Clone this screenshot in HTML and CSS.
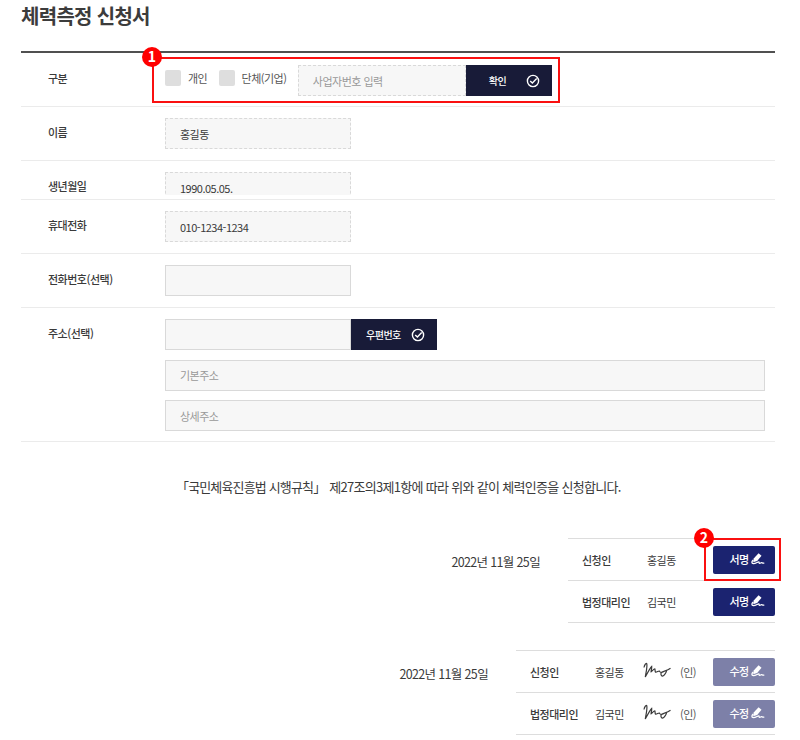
FILE: index.html
```html
<!DOCTYPE html>
<html lang="ko">
<head>
    <meta charset="UTF-8">
    <meta name="viewport" content="width=device-width, initial-scale=1.0">
    <title>체력측정 신청서</title>
    <link rel="stylesheet" href="styles.css">
</head>
<body>

    <!-- 아이콘 -->
    <svg class="sprite" width="0" height="0">
        <symbol id="icon-check" viewBox="0 0 14 14">
            <circle cx="7" cy="7" r="5.6" fill="none" stroke="currentColor" stroke-width="1.4"/>
            <path d="M4.2 7l2.2 2.1 4.3-4.6" fill="none" stroke="currentColor" stroke-width="1.4"/>
        </symbol>
        <symbol id="icon-sign" viewBox="0 0 14 12">
            <path d="M7.6 .3l2.9 2.4-4.3 5.3-4 1.3.5-3.9z" fill="currentColor"/>
            <path d="M2.3 7C.5 8.4.3 10.5 2.4 10.6c2.3 0 4.3-1.7 5.3-1.7.9 0 0 1.5.9 1.5s1.3-.8 2.1-.7c.6.1.8.6 2.6.4" fill="none" stroke="currentColor" stroke-width="1.3"/>
        </symbol>
        <symbol id="signature" viewBox="0 0 28 18">
            <path d="M1 5.5C1.5 3 3.2.5 3.8 1.8 4.5 4.5 3 10.5 2.3 15 4.5 11 7 6 8.7 4.5 9 6.5 7.8 8.8 8.1 9.8 9.3 9 10.8 6.8 11.8 6.8 12.3 7.8 11.8 9.5 12.6 10.2c1.3.2 2.4-1.2 3.6-1.2.9.6.9 1.6 2.1 1.5 1.9-.2 3.9-2.3 5.3-2-.2 2-2.4 5.3-4.1 5.7-1.6-.1-2.1-2.7-.9-3.9C20.6 9 24 9 27.5 6.3" fill="none" stroke="currentColor" stroke-width="1.2"/>
        </symbol>
    </svg>

    <div class="container">
        <h1>체력측정 신청서</h1>

        <form class="form">
            <div class="row row-type">
                <span class="label">구분</span>
                <div class="field">
                    <label class="check"><input type="checkbox">개인</label>
                    <label class="check"><input type="checkbox">단체(기업)</label>
                    <input type="text" class="input dashed biz" placeholder="사업자번호 입력">
                    <button type="button" class="btn btn-confirm">확인<svg class="icon"><use href="#icon-check"/></svg></button>
                </div>
                <div class="mark mark-type"><span class="badge">1</span></div>
            </div>
            <div class="row">
                <span class="label">이름</span>
                <div class="field"><input type="text" class="input dashed" value="홍길동"></div>
            </div>
            <div class="row row-birth">
                <span class="label">생년월일</span>
                <div class="field"><input type="text" class="input dashed" value="1990.05.05."></div>
            </div>
            <div class="row">
                <span class="label">휴대전화</span>
                <div class="field"><input type="text" class="input dashed" value="010-1234-1234"></div>
            </div>
            <div class="row">
                <span class="label">전화번호(선택)</span>
                <div class="field"><input type="text" class="input"></div>
            </div>
            <div class="row row-address">
                <span class="label">주소(선택)</span>
                <div class="field address">
                    <div class="zip">
                        <input type="text" class="input">
                        <button type="button" class="btn">우편번호<svg class="icon"><use href="#icon-check"/></svg></button>
                    </div>
                    <input type="text" class="input wide" placeholder="기본주소">
                    <input type="text" class="input wide" placeholder="상세주소">
                </div>
            </div>
        </form>

        <p class="notice"><span class="law">「국민체육진흥법 시행규칙」</span> 제27조의3제1항에 따라 위와 같이 체력인증을 신청합니다.</p>

        <!-- 서명 전 -->
        <div class="sign">
            <span class="date">2022년 11월 25일</span>
            <div class="sign-table">
                <div class="sign-row">
                    <span class="role">신청인</span>
                    <span class="name">홍길동</span>
                    <button type="button" class="btn-sign">서명<svg class="icon"><use href="#icon-sign"/></svg></button>
                    <div class="mark mark-sign"><span class="badge">2</span></div>
                </div>
                <div class="sign-row">
                    <span class="role">법정대리인</span>
                    <span class="name">김국민</span>
                    <button type="button" class="btn-sign">서명<svg class="icon"><use href="#icon-sign"/></svg></button>
                </div>
            </div>
        </div>

        <!-- 서명 후 -->
        <div class="sign signed">
            <span class="date">2022년 11월 25일</span>
            <div class="sign-table">
                <div class="sign-row">
                    <span class="role">신청인</span>
                    <span class="name">홍길동</span>
                    <svg class="signature"><use href="#signature"/></svg>
                    <span class="seal">(인)</span>
                    <button type="button" class="btn-sign">수정<svg class="icon"><use href="#icon-sign"/></svg></button>
                </div>
                <div class="sign-row">
                    <span class="role">법정대리인</span>
                    <span class="name">김국민</span>
                    <svg class="signature"><use href="#signature"/></svg>
                    <span class="seal">(인)</span>
                    <button type="button" class="btn-sign">수정<svg class="icon"><use href="#icon-sign"/></svg></button>
                </div>
            </div>
        </div>
    </div>

</body>
</html>
```
FILE: styles.css
```css
* {
    box-sizing: border-box;
}

body {
    margin: 0;
    background-color: #fff;
    color: #3a3a3a;
    font-family: "Noto Sans CJK KR", sans-serif;
    font-size: 11px;
    letter-spacing: -0.5px;
    overflow: hidden;
}

input, button {
    font-family: inherit;
    font-size: inherit;
    letter-spacing: inherit;
    margin: 0;
}

.sprite {
    display: block;
}

.container {
    width: 754px;
    margin-left: 21px;
}

h1 {
    margin: 0;
    height: 51px;
    line-height: 31px;
    font-size: 20px;
    font-weight: 700;
    letter-spacing: -0.7px;
    color: #3c3c3c;
}

/* 신청 양식 */
.form {
    border-top: 2px solid #505050;
}

.row {
    position: relative;
    display: flex;
    height: 54px;
    padding: 11px 10px 0 27px;
    border-bottom: 1px solid #ebebeb;
}

.label {
    width: 117px;
    height: 28px;
    line-height: 28px;
    font-weight: 500;
}

.field {
    display: flex;
    flex: 1;
    align-items: flex-start;
}

.row-type {
    padding-top: 12px;
}

.row-type .label {
    line-height: 26px;
}

.row-birth {
    height: 39px;
}

.row-birth .field {
    height: 23px;
    overflow: hidden;
}

.row-address {
    height: 134px;
}

.address {
    flex-direction: column;
    gap: 9.5px;
}

.zip {
    display: flex;
}

.check {
    display: flex;
    align-items: center;
    gap: 7px;
    height: 26px;
    margin-right: 11.3px;
    color: #555;
}

.check input {
    appearance: none;
    width: 16px;
    height: 16px;
    border-radius: 2px;
    background-color: #dedede;
}

.input {
    width: 186px;
    height: 31px;
    padding: 0 14px;
    border: 1px solid #d9d9d9;
    background-color: #f7f7f7;
    color: #3a3a3a;
    outline: none;
}

.input::placeholder {
    color: #999;
}

.dashed {
    border-style: dashed;
}

.biz {
    width: 168px;
}

.wide {
    width: 600px;
}

.btn {
    display: flex;
    align-items: center;
    justify-content: space-between;
    width: 86px;
    height: 31px;
    padding: 0 12px 0 15px;
    border: 0;
    background-color: #181b38;
    color: #fff;
    font-size: 10px;
    font-weight: 500;
}

.btn-confirm {
    padding-left: 23px;
}

.btn .icon {
    width: 14px;
    height: 14px;
}

/* 번호 표시 */
.mark {
    position: absolute;
    border: 2px solid #fa1010;
}

.mark-type {
    left: 131px;
    top: 4px;
    width: 408px;
    height: 46px;
}

.mark-sign {
    right: -6px;
    top: -1px;
    width: 77px;
    height: 43px;
}

.badge {
    position: absolute;
    left: -12px;
    top: -12px;
    width: 20px;
    height: 20px;
    border-radius: 50%;
    background-color: #f00;
    color: #fff;
    font-size: 14px;
    font-weight: 700;
    letter-spacing: 0;
    line-height: 19px;
    text-align: center;
}

.notice {
    margin: 0 0 39px;
    padding: 33px 0 0 155px;
    line-height: 24px;
    font-size: 13px;
    letter-spacing: -0.7px;
    white-space: nowrap;
}

.law {
    margin-right: 1px;
    letter-spacing: -0.85px;
}

/* 서명 */
.sign {
    display: flex;
    justify-content: flex-end;
    margin-bottom: 27px;
}

.date {
    margin-right: 28px;
    line-height: 47px;
    font-size: 12.5px;
    letter-spacing: -0.65px;
}

.sign-table {
    width: 207px;
    border-top: 1px solid #ddd;
}

.signed .sign-table {
    width: 259px;
}

.sign-row {
    position: relative;
    display: flex;
    align-items: center;
    height: 42px;
    padding-left: 14px;
    border-bottom: 1px solid #ddd;
}

.role {
    width: 65px;
    font-weight: 500;
}

.name {
    width: 48px;
}

.signature {
    width: 28px;
    height: 18px;
    margin-bottom: 2px;
}

.seal {
    margin-left: 9px;
    color: #555;
}

.btn-sign {
    display: flex;
    align-items: center;
    justify-content: center;
    gap: 2px;
    width: 62px;
    height: 28px;
    margin-left: auto;
    padding: 0 0 1px 6px;
    border: 0;
    border-radius: 2px;
    background-color: #1b2370;
    color: #fff;
    font-weight: 500;
}

.btn-sign .icon {
    width: 14px;
    height: 12px;
}

.signed .btn-sign {
    background-color: #7d80a8;
}
```
